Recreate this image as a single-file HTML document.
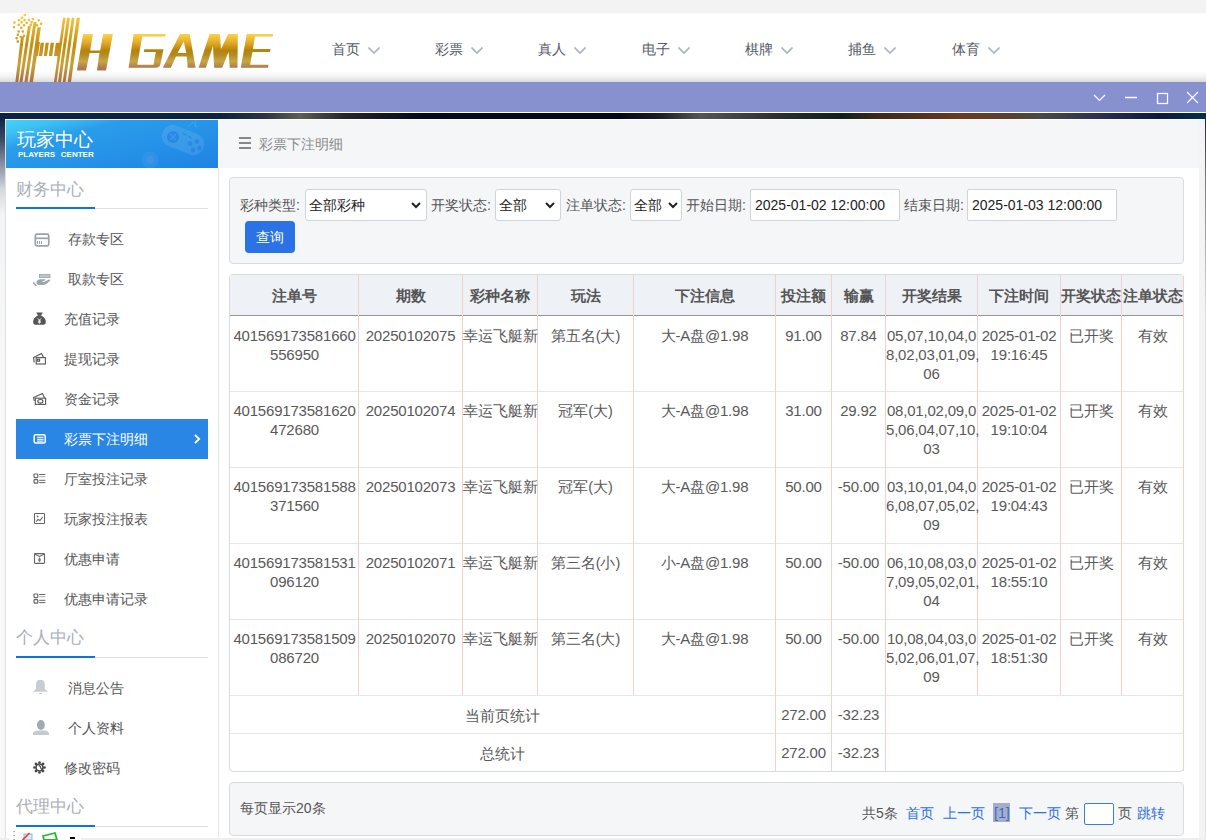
<!DOCTYPE html>
<html><head><meta charset="utf-8">
<style>
*{margin:0;padding:0;box-sizing:border-box}
html,body{width:1206px;height:840px;overflow:hidden}
body{position:relative;font-family:"Liberation Sans",sans-serif;background:#fff;color:#555}
.a{position:absolute}
.nav{position:absolute;top:40px;font-size:14px;color:#555a68;line-height:18px;white-space:nowrap}
.nav svg{position:absolute;left:36px;top:7px}
.st{position:absolute;left:16px;font-size:16.5px;color:#a9afb8;line-height:20px}
.ul{position:absolute;left:16px;width:192px;height:1px;background:#e0e0e0}
.ul:before{content:"";position:absolute;left:0;top:-1px;width:79px;height:2px;background:#0f74e0}
.mi{position:absolute;left:16px;width:192px;height:40px;font-size:14px;line-height:40px;color:#555;white-space:nowrap}
.mi span{position:absolute;top:0}
.mi svg{position:absolute}
.lbl{position:absolute;top:196px;font-size:14px;line-height:18px;color:#555;white-space:nowrap}
.sel{position:absolute;top:189px;height:32px;background:#fff;border:1px solid #ced4da;border-radius:3px;font-size:14px;line-height:30px;color:#222;padding-left:3px;white-space:nowrap}
.sel svg{position:absolute;top:12px}
.inp{position:absolute;top:189px;height:32px;width:150px;background:#fff;border:1px solid #ced4da;border-radius:2px;font-size:14px;line-height:30px;color:#222;padding-left:4px;white-space:nowrap}
.vl{position:absolute;width:1px;background:#f3cfcf}
.hl{position:absolute;left:230px;width:953px;height:1px;background:#e6e6e6}
.th{position:absolute;top:276px;height:40px;line-height:40px;font-size:15px;font-weight:bold;color:#555;text-align:center;white-space:nowrap}
.td{position:absolute;font-size:14px;line-height:19px;color:#595959;text-align:center;white-space:nowrap}
.pg{position:absolute;top:804px;font-size:14px;line-height:18px;white-space:nowrap}
.lk{color:#2d6ee0}
</style></head><body>
<!-- top strip -->
<div class="a" style="left:0;top:0;width:1206px;height:13px;background:#f3f3f3"></div>
<!-- header -->
<div class="a" style="left:0;top:13px;width:1206px;height:69px;background:linear-gradient(#fff 0,#fff 58px,#f2f2f2 64px,#dadada 69px)"></div>
<!-- nav -->
<div class="nav" style="left:332px">首页<svg width="12" height="7" viewBox="0 0 12 7"><path d="M0.5 0.5L6 6L11.5 0.5" fill="none" stroke="#a9b4cb" stroke-width="1.7"/></svg></div>
<div class="nav" style="left:435px">彩票<svg width="12" height="7" viewBox="0 0 12 7"><path d="M0.5 0.5L6 6L11.5 0.5" fill="none" stroke="#a9b4cb" stroke-width="1.7"/></svg></div>
<div class="nav" style="left:538px">真人<svg width="12" height="7" viewBox="0 0 12 7"><path d="M0.5 0.5L6 6L11.5 0.5" fill="none" stroke="#a9b4cb" stroke-width="1.7"/></svg></div>
<div class="nav" style="left:642px">电子<svg width="12" height="7" viewBox="0 0 12 7"><path d="M0.5 0.5L6 6L11.5 0.5" fill="none" stroke="#a9b4cb" stroke-width="1.7"/></svg></div>
<div class="nav" style="left:745px">棋牌<svg width="12" height="7" viewBox="0 0 12 7"><path d="M0.5 0.5L6 6L11.5 0.5" fill="none" stroke="#a9b4cb" stroke-width="1.7"/></svg></div>
<div class="nav" style="left:848px">捕鱼<svg width="12" height="7" viewBox="0 0 12 7"><path d="M0.5 0.5L6 6L11.5 0.5" fill="none" stroke="#a9b4cb" stroke-width="1.7"/></svg></div>
<div class="nav" style="left:952px">体育<svg width="12" height="7" viewBox="0 0 12 7"><path d="M0.5 0.5L6 6L11.5 0.5" fill="none" stroke="#a9b4cb" stroke-width="1.7"/></svg></div>

<!-- LOGO -->
<svg class="a" style="left:0;top:0" width="280" height="83" viewBox="0 0 280 83">
<defs>
<linearGradient id="gs" gradientUnits="userSpaceOnUse" x1="0" y1="14" x2="0" y2="82">
<stop offset="0" stop-color="#f9cf45"/><stop offset="0.45" stop-color="#c48d10"/><stop offset="0.75" stop-color="#c9a23a"/><stop offset="1" stop-color="#a87040"/></linearGradient>
<linearGradient id="gl" gradientUnits="userSpaceOnUse" x1="0" y1="34" x2="0" y2="68">
<stop offset="0" stop-color="#fdd24a"/><stop offset="0.25" stop-color="#e2ab2a"/><stop offset="0.48" stop-color="#b6820c"/><stop offset="0.62" stop-color="#b38c22"/><stop offset="0.8" stop-color="#c9a545"/><stop offset="1" stop-color="#ae7850"/></linearGradient>
</defs>
<g fill="url(#gs)"><polygon points="15.3,82 18.3,82 23.99,36.5 20.99,36.5"/>
<polygon points="19.5,82 22.5,82 30.90,26 27.90,26"/>
<polygon points="24.5,82 27.5,82 36.50,22 33.50,22"/>
<polygon points="29.5,82 33,82 40.88,27.3 37.38,27.3"/>
<polygon points="54,82 56.6,82 65.59,17.75 63.00,17.75"/>
<polygon points="58,82 61,82 70.00,17.75 67.00,17.75"/>
<polygon points="62.7,82 65.6,82 74.59,17.75 71.70,17.75"/>
<polygon points="67.7,82 71,82 80.00,17.75 76.70,17.75"/>
<polygon points="35.5,56 38,56 39.96,42 37.46,42"/>
<polygon points="38.8,56 42.2,56 44.05,42.75 40.65,42.75"/>
<polygon points="43.8,56 47,56 48.85,42.75 45.65,42.75"/>
<polygon points="48.8,56 52.2,56 54.05,42.75 50.65,42.75"/>
<polygon points="54,56 59.5,56 61.35,42.75 55.85,42.75"/>
<rect x="23.70" y="13.80" width="2.4" height="2.4" rx="0.8"/>
<rect x="20.80" y="16.55" width="2.4" height="2.4" rx="0.8"/>
<rect x="17.80" y="18.80" width="2.4" height="2.4" rx="0.8"/>
<rect x="23.30" y="18.80" width="2.4" height="2.4" rx="0.8"/>
<rect x="27.80" y="18.80" width="2.4" height="2.4" rx="0.8"/>
<rect x="31.60" y="18.00" width="2.4" height="2.4" rx="0.8"/>
<rect x="37.50" y="19.05" width="2.4" height="2.4" rx="0.8"/>
<rect x="13.30" y="21.30" width="2.4" height="2.4" rx="0.8"/>
<rect x="20.40" y="21.10" width="2.4" height="2.4" rx="0.8"/>
<rect x="25.60" y="21.55" width="2.4" height="2.4" rx="0.8"/>
<rect x="30.40" y="21.00" width="2.4" height="2.4" rx="0.8"/>
<rect x="40.00" y="22.60" width="2.4" height="2.4" rx="0.8"/>
<rect x="17.50" y="23.60" width="2.4" height="2.4" rx="0.8"/>
<rect x="22.80" y="24.05" width="2.4" height="2.4" rx="0.8"/>
<rect x="29.55" y="23.60" width="2.4" height="2.4" rx="0.8"/>
<rect x="35.80" y="24.05" width="2.4" height="2.4" rx="0.8"/>
<rect x="12.80" y="26.00" width="2.4" height="2.4" rx="0.8"/>
<rect x="20.00" y="26.55" width="2.4" height="2.4" rx="0.8"/>
<rect x="17.50" y="30.30" width="2.4" height="2.4" rx="0.8"/>
<rect x="21.60" y="30.30" width="2.4" height="2.4" rx="0.8"/>
<rect x="16.60" y="33.60" width="2.4" height="2.4" rx="0.8"/>
<rect x="22.80" y="34.60" width="2.4" height="2.4" rx="0.8"/>
<rect x="19.55" y="35.70" width="2.4" height="2.4" rx="0.8"/>
<rect x="15.40" y="37.00" width="2.4" height="2.4" rx="0.8"/>
<rect x="16.60" y="40.30" width="2.4" height="2.4" rx="0.8"/></g>
<g fill="url(#gl)"><polygon points="76.9,70.6 86,70.6 89.6,53.1 99.5,53.1 96.9,70.6 106,70.6 112.9,34 103.1,34 100.2,50.6 90.2,50.6 92.9,34 83.1,34"/><path d="M133.6,34 L165.8,34 L165.3,36.6 L142.2,36.6 L137.3,64.8 L153.5,64.8 L155.8,51.9 L143.8,51.9 L144.3,49.2 L163.5,49.2 L160.5,64 Q159.6,67.8 155.5,67.8 L128.6,67.8 Z"/><path d="M162.8,67.8 L170.8,67.8 L176,56.5 L186.8,56.5 L187.7,67.8 L195.6,67.8 L189.7,34 L180,34 Z M177.6,52.9 L183.7,41.6 L186.3,52.9 Z" fill-rule="evenodd"/><path d="M198.6,67.8 L205.9,67.8 L213,46 L214.2,67.8 L222.2,67.8 L228.5,52 L229.8,67.8 L237.5,67.8 L237.8,34 L228.2,34 L221,49 L219.9,34 L209.6,34 Z"/><path d="M246.7,34 L273.3,34 L272.8,36.6 L255,36.6 L252.9,48.9 L270.5,48.9 L270,51.9 L252.4,51.9 L250.1,64.8 L268.5,64.8 L268,67.8 L240.8,67.8 Z"/></g>
</svg>

<!-- purple bar -->
<div class="a" style="left:0;top:82px;width:1206px;height:30px;background:#8791d0"></div>
<div class="a" style="left:0;top:112px;width:1206px;height:1px;background:#fff"></div>
<svg class="a" style="left:0;top:82px" width="1206" height="30">
<path d="M1094 95L1099.5 100.5L1105 95" transform="translate(0,-82)" fill="none" stroke="#fff" stroke-width="1.2"/>
<path d="M1125 15.5H1137" fill="none" stroke="#fff" stroke-width="1.5"/>
<rect x="1157.5" y="11.5" width="10" height="10" fill="none" stroke="#fff" stroke-width="1.3"/>
<path d="M1187 10L1198 21M1198 10L1187 21" fill="none" stroke="#fff" stroke-width="1.2"/>
</svg>

<!-- window background -->
<div class="a" style="left:0;top:113px;width:1206px;height:727px;background:linear-gradient(90deg,#0b2346 0,#0d2240 220px,#2a3444 265px,#5e5e52 300px,#22252a 345px,#050a18 420px,#040814 620px,#1a1d24 660px,#555 700px,#2a2e2e 780px,#10201e 840px,#3e2a1c 880px,#6a3a22 960px,#5a4030 1010px,#4a4a44 1040px,#2a3050 1100px,#0c1a3a 1160px,#03304a 1206px)"></div>
<div class="a" style="left:0;top:119px;width:6px;height:721px;background:linear-gradient(#0f2648 0,#3c4c66 21px,#8a93a3 46px,#d5d9df 71px,#f4f5f6 96px,#f8f8f8 300px)"></div>
<div class="a" style="left:1205px;top:119px;width:1px;height:721px;background:linear-gradient(#0a2a48 0,#777a88 60px,#e3e3e3 200px)"></div>

<!-- window -->
<div class="a" style="left:5px;top:119px;width:1200px;height:721px;background:#fff"></div>
<!-- sidebar border -->
<div class="a" style="left:5px;top:120px;width:1px;height:718px;background:#dcdfe3"></div>
<div class="a" style="left:218px;top:168px;width:1px;height:670px;background:#e4e7eb"></div>
<!-- sidebar header -->
<div class="a" style="left:6px;top:120px;width:212px;height:48px;overflow:hidden;background:linear-gradient(166deg,#46d3f7 0,#3cc0f4 14%,#2a9cea 30%,#2694e8 55%,#1f82e4 100%)">
  <div class="a" style="left:11px;top:9px;font-size:19px;line-height:22px;color:#fff">玩家中心</div>
  <div class="a" style="left:12px;top:30px;font-size:8px;font-weight:bold;line-height:10px;color:#fff;word-spacing:3.5px">PLAYERS CENTER</div>
</div>
<!-- breadcrumb -->
<div class="a" style="left:219px;top:120px;width:980px;height:48px;background:#f5f6f8"></div>
<div class="a" style="left:239px;top:137px;width:12px;height:2px;background:#888"></div>
<div class="a" style="left:239px;top:142px;width:12px;height:2px;background:#888"></div>
<div class="a" style="left:239px;top:147px;width:12px;height:2px;background:#888"></div>
<div class="a" style="left:259px;top:135px;font-size:14px;line-height:18px;color:#888">彩票下注明细</div>
<!-- scrollbar track -->
<div class="a" style="left:1199px;top:120px;width:6px;height:718px;background:#f4f4f4"></div>
<!-- bottom strip -->
<div class="a" style="left:81px;top:838px;width:1125px;height:2px;background:#efefef"></div><div class="a" style="left:0;top:838px;width:9px;height:2px;background:#efefef"></div>

<!-- SIDEBAR -->
<div class="st" style="top:179px">财务中心</div><div class="ul" style="top:208px"></div>
<div class="st" style="top:627px">个人中心</div><div class="ul" style="top:657px"></div>
<div class="st" style="top:796px">代理中心</div><div class="ul" style="top:826px"></div>
<div class="mi" style="top:219px"><span style="left:52px">存款专区</span></div>
<div class="mi" style="top:259px"><span style="left:52px">取款专区</span></div>
<div class="mi" style="top:299px"><span style="left:48px">充值记录</span></div>
<div class="mi" style="top:339px"><span style="left:48px">提现记录</span></div>
<div class="mi" style="top:379px"><span style="left:48px">资金记录</span></div>
<div class="mi" style="top:419px;background:#2a86e4;color:#fff"><span style="left:48px">彩票下注明细</span><svg style="left:178px;top:15px" width="7" height="10" viewBox="0 0 7 10"><path d="M1 1L5.2 5L1 9" fill="none" stroke="#fff" stroke-width="1.8"/></svg></div>
<div class="mi" style="top:459px"><span style="left:48px">厅室投注记录</span></div>
<div class="mi" style="top:499px"><span style="left:48px">玩家投注报表</span></div>
<div class="mi" style="top:539px"><span style="left:48px">优惠申请</span></div>
<div class="mi" style="top:579px"><span style="left:48px">优惠申请记录</span></div>
<div class="mi" style="top:668px"><span style="left:52px">消息公告</span></div>
<div class="mi" style="top:708px"><span style="left:52px">个人资料</span></div>
<div class="mi" style="top:748px"><span style="left:48px">修改密码</span></div>

<!-- FILTER -->
<div class="a" style="left:229px;top:177px;width:955px;height:87px;background:#f5f6f8;border:1px solid #d8dce2;border-radius:4px"></div>
<div class="lbl" style="left:240px">彩种类型:</div>
<div class="sel" style="left:305px;width:122px">全部彩种<svg width="10" height="7" viewBox="0 0 10 7" style="right:5px"><path d="M1 1L5 5L9 1" fill="none" stroke="#222" stroke-width="2"/></svg></div>
<div class="lbl" style="left:431px">开奖状态:</div>
<div class="sel" style="left:495px;width:66px">全部<svg width="10" height="7" viewBox="0 0 10 7" style="right:5px"><path d="M1 1L5 5L9 1" fill="none" stroke="#222" stroke-width="2"/></svg></div>
<div class="lbl" style="left:566px">注单状态:</div>
<div class="sel" style="left:630px;width:52px">全部<svg width="10" height="7" viewBox="0 0 10 7" style="right:3px"><path d="M1 1L5 5L9 1" fill="none" stroke="#222" stroke-width="2"/></svg></div>
<div class="lbl" style="left:686px">开始日期:</div>
<div class="inp" style="left:750px">2025-01-02 12:00:00</div>
<div class="lbl" style="left:904px">结束日期:</div>
<div class="inp" style="left:967px">2025-01-03 12:00:00</div>
<div class="a" style="left:245px;top:221px;width:50px;height:32px;background:#2a72e6;border-radius:4px;color:#fff;font-size:14px;line-height:32px;text-align:center">查询</div>

<!-- TABLE -->
<div class="a" style="left:229px;top:274px;width:955px;height:498px;border:1px solid #d6dbe1;border-radius:4px;overflow:hidden;background:#fff"><div class="a" style="left:0;top:0;width:953px;height:41px;background:#eef2f6"></div></div>
<div class="a" style="left:230px;top:315px;width:953px;height:1px;background:#9e9494"></div>
<div class="hl" style="top:391px"></div>
<div class="hl" style="top:467px"></div>
<div class="hl" style="top:543px"></div>
<div class="hl" style="top:619px"></div>
<div class="hl" style="top:695px"></div>
<div class="hl" style="top:733px"></div>
<div class="vl" style="left:358px;top:275px;height:420px"></div>
<div class="vl" style="left:462px;top:275px;height:420px"></div>
<div class="vl" style="left:537px;top:275px;height:420px"></div>
<div class="vl" style="left:633px;top:275px;height:420px"></div>
<div class="vl" style="left:775px;top:275px;height:420px"></div>
<div class="vl" style="left:831px;top:275px;height:420px"></div>
<div class="vl" style="left:885px;top:275px;height:420px"></div>
<div class="vl" style="left:977px;top:275px;height:420px"></div>
<div class="vl" style="left:1060px;top:275px;height:420px"></div>
<div class="vl" style="left:1121px;top:275px;height:420px"></div>
<div class="vl" style="left:775px;top:695px;height:76px"></div>
<div class="vl" style="left:831px;top:695px;height:76px"></div>
<div class="vl" style="left:885px;top:695px;height:76px"></div>
<div class="vl" style="left:1183px;top:276px;height:495px"></div>
<div class="th" style="left:231px;width:127px">注单号</div>
<div class="th" style="left:359px;width:103px">期数</div>
<div class="th" style="left:463px;width:74px">彩种名称</div>
<div class="th" style="left:538px;width:95px">玩法</div>
<div class="th" style="left:634px;width:141px">下注信息</div>
<div class="th" style="left:776px;width:55px">投注额</div>
<div class="th" style="left:832px;width:53px">输赢</div>
<div class="th" style="left:886px;width:91px">开奖结果</div>
<div class="th" style="left:978px;width:82px">下注时间</div>
<div class="th" style="left:1061px;width:60px">开奖状态</div>
<div class="th" style="left:1122px;width:61px">注单状态</div>
<div class="td" style="left:231px;width:127px;top:326px;font-size:15px;letter-spacing:-0.2px">401569173581660<br>556950</div>
<div class="td" style="left:359px;width:103px;top:326px;font-size:15px;letter-spacing:-0.2px">20250102075</div>
<div class="td" style="left:463px;width:74px;top:327px;font-size:14.5px">幸运飞艇新</div>
<div class="td" style="left:538px;width:95px;top:327px;font-size:14.5px">第五名(大)</div>
<div class="td" style="left:634px;width:141px;top:326px;font-size:15px;letter-spacing:-0.2px">大-A盘@1.98</div>
<div class="td" style="left:776px;width:55px;top:326px;font-size:15px;letter-spacing:-0.2px">91.00</div>
<div class="td" style="left:832px;width:53px;top:326px;font-size:15px;letter-spacing:-0.2px">87.84</div>
<div class="td" style="left:886px;width:91px;top:326px;font-size:15px;letter-spacing:-0.2px">05,07,10,04,0<br>8,02,03,01,09,<br>06</div>
<div class="td" style="left:978px;width:82px;top:326px;font-size:15px;letter-spacing:-0.2px">2025-01-02<br>19:16:45</div>
<div class="td" style="left:1061px;width:60px;top:327px;font-size:14.5px">已开奖</div>
<div class="td" style="left:1122px;width:61px;top:327px;font-size:14.5px">有效</div>
<div class="td" style="left:231px;width:127px;top:401px;font-size:15px;letter-spacing:-0.2px">401569173581620<br>472680</div>
<div class="td" style="left:359px;width:103px;top:401px;font-size:15px;letter-spacing:-0.2px">20250102074</div>
<div class="td" style="left:463px;width:74px;top:402px;font-size:14.5px">幸运飞艇新</div>
<div class="td" style="left:538px;width:95px;top:402px;font-size:14.5px">冠军(大)</div>
<div class="td" style="left:634px;width:141px;top:401px;font-size:15px;letter-spacing:-0.2px">大-A盘@1.98</div>
<div class="td" style="left:776px;width:55px;top:401px;font-size:15px;letter-spacing:-0.2px">31.00</div>
<div class="td" style="left:832px;width:53px;top:401px;font-size:15px;letter-spacing:-0.2px">29.92</div>
<div class="td" style="left:886px;width:91px;top:401px;font-size:15px;letter-spacing:-0.2px">08,01,02,09,0<br>5,06,04,07,10,<br>03</div>
<div class="td" style="left:978px;width:82px;top:401px;font-size:15px;letter-spacing:-0.2px">2025-01-02<br>19:10:04</div>
<div class="td" style="left:1061px;width:60px;top:402px;font-size:14.5px">已开奖</div>
<div class="td" style="left:1122px;width:61px;top:402px;font-size:14.5px">有效</div>
<div class="td" style="left:231px;width:127px;top:477px;font-size:15px;letter-spacing:-0.2px">401569173581588<br>371560</div>
<div class="td" style="left:359px;width:103px;top:477px;font-size:15px;letter-spacing:-0.2px">20250102073</div>
<div class="td" style="left:463px;width:74px;top:478px;font-size:14.5px">幸运飞艇新</div>
<div class="td" style="left:538px;width:95px;top:478px;font-size:14.5px">冠军(大)</div>
<div class="td" style="left:634px;width:141px;top:477px;font-size:15px;letter-spacing:-0.2px">大-A盘@1.98</div>
<div class="td" style="left:776px;width:55px;top:477px;font-size:15px;letter-spacing:-0.2px">50.00</div>
<div class="td" style="left:832px;width:53px;top:477px;font-size:15px;letter-spacing:-0.2px">-50.00</div>
<div class="td" style="left:886px;width:91px;top:477px;font-size:15px;letter-spacing:-0.2px">03,10,01,04,0<br>6,08,07,05,02,<br>09</div>
<div class="td" style="left:978px;width:82px;top:477px;font-size:15px;letter-spacing:-0.2px">2025-01-02<br>19:04:43</div>
<div class="td" style="left:1061px;width:60px;top:478px;font-size:14.5px">已开奖</div>
<div class="td" style="left:1122px;width:61px;top:478px;font-size:14.5px">有效</div>
<div class="td" style="left:231px;width:127px;top:553px;font-size:15px;letter-spacing:-0.2px">401569173581531<br>096120</div>
<div class="td" style="left:359px;width:103px;top:553px;font-size:15px;letter-spacing:-0.2px">20250102071</div>
<div class="td" style="left:463px;width:74px;top:554px;font-size:14.5px">幸运飞艇新</div>
<div class="td" style="left:538px;width:95px;top:554px;font-size:14.5px">第三名(小)</div>
<div class="td" style="left:634px;width:141px;top:553px;font-size:15px;letter-spacing:-0.2px">小-A盘@1.98</div>
<div class="td" style="left:776px;width:55px;top:553px;font-size:15px;letter-spacing:-0.2px">50.00</div>
<div class="td" style="left:832px;width:53px;top:553px;font-size:15px;letter-spacing:-0.2px">-50.00</div>
<div class="td" style="left:886px;width:91px;top:553px;font-size:15px;letter-spacing:-0.2px">06,10,08,03,0<br>7,09,05,02,01,<br>04</div>
<div class="td" style="left:978px;width:82px;top:553px;font-size:15px;letter-spacing:-0.2px">2025-01-02<br>18:55:10</div>
<div class="td" style="left:1061px;width:60px;top:554px;font-size:14.5px">已开奖</div>
<div class="td" style="left:1122px;width:61px;top:554px;font-size:14.5px">有效</div>
<div class="td" style="left:231px;width:127px;top:629px;font-size:15px;letter-spacing:-0.2px">401569173581509<br>086720</div>
<div class="td" style="left:359px;width:103px;top:629px;font-size:15px;letter-spacing:-0.2px">20250102070</div>
<div class="td" style="left:463px;width:74px;top:630px;font-size:14.5px">幸运飞艇新</div>
<div class="td" style="left:538px;width:95px;top:630px;font-size:14.5px">第三名(大)</div>
<div class="td" style="left:634px;width:141px;top:629px;font-size:15px;letter-spacing:-0.2px">大-A盘@1.98</div>
<div class="td" style="left:776px;width:55px;top:629px;font-size:15px;letter-spacing:-0.2px">50.00</div>
<div class="td" style="left:832px;width:53px;top:629px;font-size:15px;letter-spacing:-0.2px">-50.00</div>
<div class="td" style="left:886px;width:91px;top:629px;font-size:15px;letter-spacing:-0.2px">10,08,04,03,0<br>5,02,06,01,07,<br>09</div>
<div class="td" style="left:978px;width:82px;top:629px;font-size:15px;letter-spacing:-0.2px">2025-01-02<br>18:51:30</div>
<div class="td" style="left:1061px;width:60px;top:630px;font-size:14.5px">已开奖</div>
<div class="td" style="left:1122px;width:61px;top:630px;font-size:14.5px">有效</div>
<div class="td" style="left:230px;width:545px;top:707px;font-size:14.5px">当前页统计</div>
<div class="td" style="left:230px;width:545px;top:745px;font-size:14.5px">总统计</div>
<div class="td" style="left:776px;width:55px;top:705px;font-size:15px;letter-spacing:-0.2px">272.00</div>
<div class="td" style="left:832px;width:53px;top:705px;font-size:15px;letter-spacing:-0.2px">-32.23</div>
<div class="td" style="left:776px;width:55px;top:743px;font-size:15px;letter-spacing:-0.2px">272.00</div>
<div class="td" style="left:832px;width:53px;top:743px;font-size:15px;letter-spacing:-0.2px">-32.23</div>

<!-- PAGINATION -->
<div class="a" style="left:229px;top:782px;width:955px;height:54px;background:#f5f6f8;border:1px solid #d8dce2;border-radius:4px"></div>
<div class="pg" style="left:240px;top:799px;color:#555">每页显示20条</div>
<div class="pg" style="left:862px;color:#555">共5条</div>
<div class="pg lk" style="left:906px">首页</div>
<div class="pg lk" style="left:943px">上一页</div>
<div class="a" style="left:993px;top:803px;width:17px;height:19px;background:#a9adc4"></div>
<div class="pg lk" style="left:994px">[1]</div>
<div class="pg lk" style="left:1019px">下一页</div>
<div class="pg" style="left:1065px;color:#555">第</div>
<div class="a" style="left:1084px;top:803px;width:30px;height:22px;background:#fff;border:1px solid #3b7de0;border-radius:2px"></div>
<div class="pg" style="left:1118px;color:#555">页</div>
<div class="pg lk" style="left:1137px">跳转</div>
<svg class="a" style="left:0;top:0;pointer-events:none" width="230" height="840" viewBox="0 0 230 840">
<!-- card 存款 -->
<g fill="none" stroke="#98a3ae" stroke-width="1.7">
<rect x="35.35" y="234.05" width="13.4" height="11.9" rx="1.6"/>
<line x1="35.4" y1="238.3" x2="48.7" y2="238.3"/>
</g>
<g stroke="#98a3ae" stroke-width="1"><line x1="37.5" y1="241" x2="37.5" y2="244"/><line x1="39.5" y1="241" x2="39.5" y2="244"/><line x1="41.5" y1="241" x2="41.5" y2="244"/></g>
<!-- hand 取款 -->
<rect x="39.4" y="274.4" width="10.6" height="3.2" fill="#bcc4cc" stroke="#9aa5b0" stroke-width="0.8"/>
<g fill="#9aa5b0">
<path d="M36.6 281.4 Q38 279.2 40.5 279.2 L45 279.2 Q46 279.3 45.2 280.6 L41.8 281.3 L44 282 L48.5 279.8 Q50.6 279 50.3 280.3 L47 283.5 Q45 285 42 285 L39.3 285 Q37.8 285 36.6 283.8 Z"/>
<path d="M32.6 282.9 L33.8 282 L37 285.6 L35.8 286.4 Z"/>
</g>
<!-- money bag 充值 -->
<g fill="#555">
<path d="M36.3 312.6 L42.7 312.6 L41 315.8 L38 315.8 Z"/>
<path d="M38 315.6 L41 315.6 Q45.8 318 45.8 321.8 Q45.8 324.8 43.3 324.8 L35.6 324.8 Q33.1 324.8 33.1 321.8 Q33.1 318 38 315.6 Z"/>
</g>
<path d="M37.8 318.3 L39.45 320.2 L41.1 318.3 M39.45 320.2 V323.6 M37.9 321 H41 M37.9 322.3 H41" fill="none" stroke="#fff" stroke-width="0.85"/>
<!-- wallet 提现 -->
<g fill="none" stroke="#555" stroke-width="1.1">
<path d="M34.2 362.5 L33.6 357.6 L41.5 353.6 L43.6 357.5"/>
<rect x="36.2" y="357.6" width="9.2" height="6.4"/>
<rect x="37.6" y="359.2" width="2" height="2"/>
</g>
<!-- cash 资金 -->
<g fill="none" stroke="#555" stroke-width="1.1">
<path d="M34.3 401 L33.6 397.6 L42.5 393.5 L44.5 398"/>
<rect x="35.3" y="398.2" width="10.3" height="6.2"/>
<ellipse cx="40.4" cy="401.3" rx="2.6" ry="1.8"/>
</g>
<!-- active list 彩票下注明细 -->
<g fill="none" stroke="#fff" stroke-width="1.5">
<rect x="34.2" y="434.8" width="11" height="8.3" rx="1.5"/>
</g>
<g stroke="#fff" stroke-width="1.1"><line x1="37" y1="437.3" x2="43.5" y2="437.3"/><line x1="37" y1="439.3" x2="43.5" y2="439.3"/><line x1="37" y1="441.1" x2="43.5" y2="441.1"/></g>
<!-- list 厅室 -->
<g fill="none" stroke="#666" stroke-width="1.2">
<rect x="34" y="474" width="3.8" height="3.6" rx="0.8"/><rect x="34" y="479.6" width="3.8" height="3.6" rx="0.8"/>
</g>
<g stroke="#666" stroke-width="1"><line x1="39.2" y1="474.5" x2="45.4" y2="474.5"/><line x1="39.2" y1="476.7" x2="45.4" y2="476.7" stroke="#aaa"/><line x1="39.2" y1="480.3" x2="45.4" y2="480.3"/><line x1="39.2" y1="482.6" x2="45.4" y2="482.6"/></g>
<!-- chart 报表 -->
<g fill="none" stroke="#666" stroke-width="1.1">
<rect x="34.5" y="513.5" width="10" height="10" rx="0.8"/>
<path d="M36.2 521.6 L38 519.4 L40 520.5 L42.6 517"/>
</g>
<circle cx="37.6" cy="516.4" r="0.9" fill="#666"/>
<!-- gift 优惠申请 -->
<g fill="none" stroke="#666" stroke-width="1.1">
<rect x="34.5" y="553.6" width="10" height="9.8" rx="0.8"/>
<path d="M34.6 554 L39.5 556.5 L44.4 554"/>
</g>
<path d="M39.5 557 L41 560 L39.5 562.6 L38 560 Z" fill="#777"/>
<!-- list 优惠申请记录 -->
<g fill="none" stroke="#666" stroke-width="1.2">
<rect x="34" y="594" width="3.8" height="3.6" rx="0.8"/><rect x="34" y="599.6" width="3.8" height="3.6" rx="0.8"/>
</g>
<g stroke="#666" stroke-width="1"><line x1="39.2" y1="594.5" x2="45.4" y2="594.5"/><line x1="39.2" y1="596.7" x2="45.4" y2="596.7" stroke="#aaa"/><line x1="39.2" y1="600.3" x2="45.4" y2="600.3"/><line x1="39.2" y1="602.6" x2="45.4" y2="602.6"/></g>
<!-- bell -->
<path d="M38.3 680 L42.3 680 Q44.8 681 44.8 684 L44.8 689 L48 691.8 L33 691.8 L36 689 L36 684 Q36 681 38.3 680 Z" fill="#c8cdd4"/>
<rect x="39" y="693" width="3" height="1" fill="#c8cdd4"/>
<!-- person -->
<ellipse cx="40.9" cy="725" rx="3.9" ry="5" fill="#9eaab4"/>
<path d="M33 735 L33 733 Q34 731 37 730.6 L44.6 730.6 Q48 731 49 733 L49 735 Z" fill="#c5cbd3"/>
<!-- gear -->
<g fill="#484848"><circle cx="44.50" cy="767.50" r="1.35"/><circle cx="43.04" cy="771.04" r="1.35"/><circle cx="39.50" cy="772.50" r="1.35"/><circle cx="35.96" cy="771.04" r="1.35"/><circle cx="34.50" cy="767.50" r="1.35"/><circle cx="35.96" cy="763.96" r="1.35"/><circle cx="39.50" cy="762.50" r="1.35"/><circle cx="43.04" cy="763.96" r="1.35"/></g>
<circle cx="39.5" cy="767.5" r="3.5" fill="#fff" stroke="#484848" stroke-width="1.7"/>
<path d="M38.6 765.6 Q40.9 765.9 40.7 768.1 L42.6 770" fill="none" stroke="#484848" stroke-width="1.1"/>
<!-- bottom partial icons -->
<g fill="#888"><rect x="13.5" y="831" width="1.2" height="1.2"/><rect x="13.5" y="835" width="1.2" height="1.2"/><rect x="13.5" y="839" width="1.2" height="1"/></g>
<rect x="24" y="834" width="8" height="6" fill="#dde8f8" stroke="#6aa8f0" stroke-width="0.8"/>
<path d="M22.5 840 L29.5 833" stroke="#ff3300" stroke-width="1.5"/>
<path d="M43 836 L55 833 L57 840 L44 840 Z" fill="none" stroke="#22bb22" stroke-width="1.8"/>
<rect x="70" y="837" width="5" height="2" fill="#000"/>
<!-- sidebar header watermark -->
<g transform="rotate(22 183 140)">
<rect x="161" y="129" width="44" height="22" rx="11" fill="#fff" opacity="0.1"/>
</g>
<circle cx="173" cy="137" r="6" fill="#1a78dc" opacity="0.55"/>
<path d="M170 134L176 140M176 134L170 140" stroke="#4aa6f0" stroke-width="1.3" opacity="0.6"/>
<g fill="#1a78dc" opacity="0.5"><circle cx="190" cy="143.5" r="2.2"/><circle cx="197" cy="141.5" r="2.2"/><circle cx="193" cy="150" r="2.2"/><circle cx="199.5" cy="148" r="2.2"/></g>
<path d="M183 133L186.5 135.5M188.5 136L191.5 138" stroke="#1a78dc" stroke-width="1.2" opacity="0.5"/>
<path d="M188 127 L193 122 L196 127 L195 120" fill="none" stroke="#fff" stroke-width="0.9" opacity="0.12"/>
<circle cx="150" cy="160" r="8.5" fill="#fff" opacity="0.05"/>
<circle cx="150" cy="160" r="4" fill="#fff" opacity="0.05"/>
</svg>

</body></html>
